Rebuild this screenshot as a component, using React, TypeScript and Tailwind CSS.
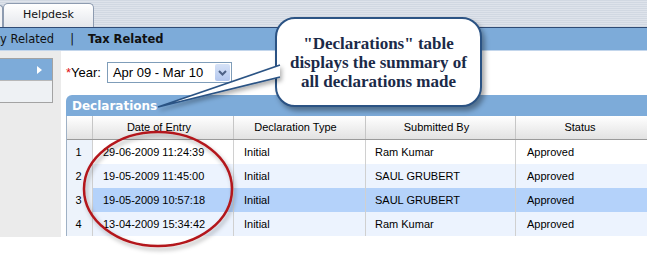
import React from 'react';

interface Declaration {
  n: number;
  date: string;
  type: string;
  by: string;
  status: string;
}

const rows: Declaration[] = [
  { n: 1, date: '29-06-2009 11:24:39', type: 'Initial', by: 'Ram Kumar', status: 'Approved' },
  { n: 2, date: '19-05-2009 11:45:00', type: 'Initial', by: 'SAUL GRUBERT', status: 'Approved' },
  { n: 3, date: '19-05-2009 10:57:18', type: 'Initial', by: 'SAUL GRUBERT', status: 'Approved' },
  { n: 4, date: '13-04-2009 15:34:42', type: 'Initial', by: 'Ram Kumar', status: 'Approved' },
];

const cols = 'grid grid-cols-[26px_141px_132px_150px_140px]';

export default function App() {
  return (
    <div className="relative h-[257px] w-[647px] overflow-hidden bg-white font-['Liberation_Sans',Arial,sans-serif] text-black">
      {/* tab strip */}
      <div className="flex h-[27px] items-end bg-[repeating-linear-gradient(180deg,#d1d8e2_0px,#d1d8e2_1px,#dee3eb_1px,#dee3eb_2px)]">
        <div className="h-[22px] w-[3px] rounded-tr-[3px] border-r border-t border-[#8d9bb0] bg-[#f3f4f6]" />
        <div className="flex h-[24px] w-[91px] items-center justify-center rounded-t-[5px] border border-b-0 border-[#8d9bb0] bg-gradient-to-b from-white to-[#e4e7ec] font-['DejaVu_Sans',sans-serif] text-[11px] text-[#111]">
          Helpdesk
        </div>
      </div>

      {/* sub navigation */}
      <div className="flex h-[24px] items-center border-b border-t border-b-[#c3d6ec] border-t-[#2f4b75] bg-[#7dabd9] pt-[2px] font-['DejaVu_Sans',sans-serif] text-[11.5px] text-[#111]">
        <span>y Related</span>
        <span className="ml-[16px]">|</span>
        <span className="ml-[14px] font-bold">Tax Related</span>
      </div>

      <div className="flex h-[206px]">
        {/* left menu */}
        <div className="h-[186px] w-[61px] shrink-0 bg-[#ebebeb] pt-[7px]">
          <div className="ml-[-4px] w-[57px] border border-[#a3a3a3]">
            <div className="flex h-[21px] items-center justify-end bg-[#7dabd9] pr-[10px]">
              <div className="h-0 w-0 border-y-[4px] border-l-[5px] border-y-transparent border-l-white" />
            </div>
            <div className="h-[22px] border-t border-[#b8b8b8] bg-[#eef1f4]" />
          </div>
        </div>

        {/* main content */}
        <div className="min-w-0 flex-1 pl-[5px] pt-[11px]">
          <div className="flex h-[21px] items-center text-[13px]">
            <span className="text-[#e01010]">*</span>
            <span>Year:</span>
            <div className="ml-[6px] flex h-[21px] w-[125px] items-center justify-between border border-[#7f9db9] bg-white pl-[5px] pr-[1px]">
              <span>Apr 09 - Mar 10</span>
              <div className="flex h-[17px] w-[15px] items-center justify-center rounded-[2px] bg-gradient-to-b from-[#d6e2f7] to-[#b3c7ee]">
                <svg width="9" height="6" viewBox="0 0 9 6">
                  <path d="M1 1 L4.5 4.5 L8 1" fill="none" stroke="#4d6185" strokeWidth="2" />
                </svg>
              </div>
            </div>
          </div>

          {/* declarations panel */}
          <div className="mt-[12px] w-[600px]">
            <div className="flex h-[21px] items-center rounded-tl-[6px] bg-[#7dabd9] pl-[6px] font-['DejaVu_Sans',sans-serif] text-[12px] font-bold text-white">
              Declarations
            </div>
            <div className="border-l border-[#9fb1c5] text-[11px]">
              <div className={`${cols} h-[24px] border-b border-[#9a9a9a] bg-gradient-to-b from-white to-[#e2e2e2]`}>
                <div className="border-r border-[#c6c6c6]" />
                <div className="flex items-center justify-center border-r border-[#c6c6c6] pr-[8px]">Date of Entry</div>
                <div className="flex items-center justify-center border-r border-[#c6c6c6] pr-[8px]">Declaration Type</div>
                <div className="flex items-center justify-center border-r border-[#c6c6c6] pr-[8px]">Submitted By</div>
                <div className="flex items-center justify-center pr-[12px]">Status</div>
              </div>
              {rows.map((r) => {
                const bg = r.n === 3 ? 'bg-[#b4d2fa]' : r.n % 2 === 0 ? 'bg-[#ecf3fe]' : 'bg-white';
                return (
                  <div key={r.n} className={`${cols} h-[24px]`}>
                    <div className="flex items-center justify-center border-r border-[#d0d0d0] bg-[#edf3fb] pr-[2px]">{r.n}</div>
                    <div className={`flex items-center border-r border-[#d0d0d0] pl-[10px] ${bg}`}>{r.date}</div>
                    <div className={`flex items-center border-r border-[#d0d0d0] pl-[10px] ${bg}`}>{r.type}</div>
                    <div className={`flex items-center border-r border-[#d0d0d0] pl-[9px] ${bg}`}>{r.by}</div>
                    <div className={`flex items-center pl-[11px] ${bg}`}>{r.status}</div>
                  </div>
                );
              })}
            </div>
          </div>
        </div>
      </div>

      {/* callout */}
      <div className="absolute left-[275px] top-[17px] flex h-[90px] w-[207px] items-center justify-center rounded-[20px] border-2 border-[#2b5384] bg-white shadow-[3px_4px_5px_rgba(0,0,0,0.35)]">
        <p className="text-center font-['Liberation_Serif',serif] text-[17px] font-bold leading-[19px] text-[#1b2a48]">
          "Declarations" table
          <br />
          displays the summary of
          <br />
          all declarations made
        </p>
      </div>

      <svg className="pointer-events-none absolute left-0 top-0" width="647" height="257" viewBox="0 0 647 257">
        <defs>
          <filter id="sh" x="-20%" y="-20%" width="140%" height="140%">
            <feDropShadow dx="2" dy="3" stdDeviation="2" floodColor="#000" floodOpacity="0.3" />
          </filter>
        </defs>
        <path d="M280 65 L158 107 L280 77" fill="#fff" stroke="#2b5384" strokeWidth="1.6" filter="url(#sh)" />
        <ellipse cx="158" cy="189" rx="74" ry="57" fill="none" stroke="#b3191b" strokeWidth="2.5" filter="url(#sh)" />
      </svg>
    </div>
  );
}
